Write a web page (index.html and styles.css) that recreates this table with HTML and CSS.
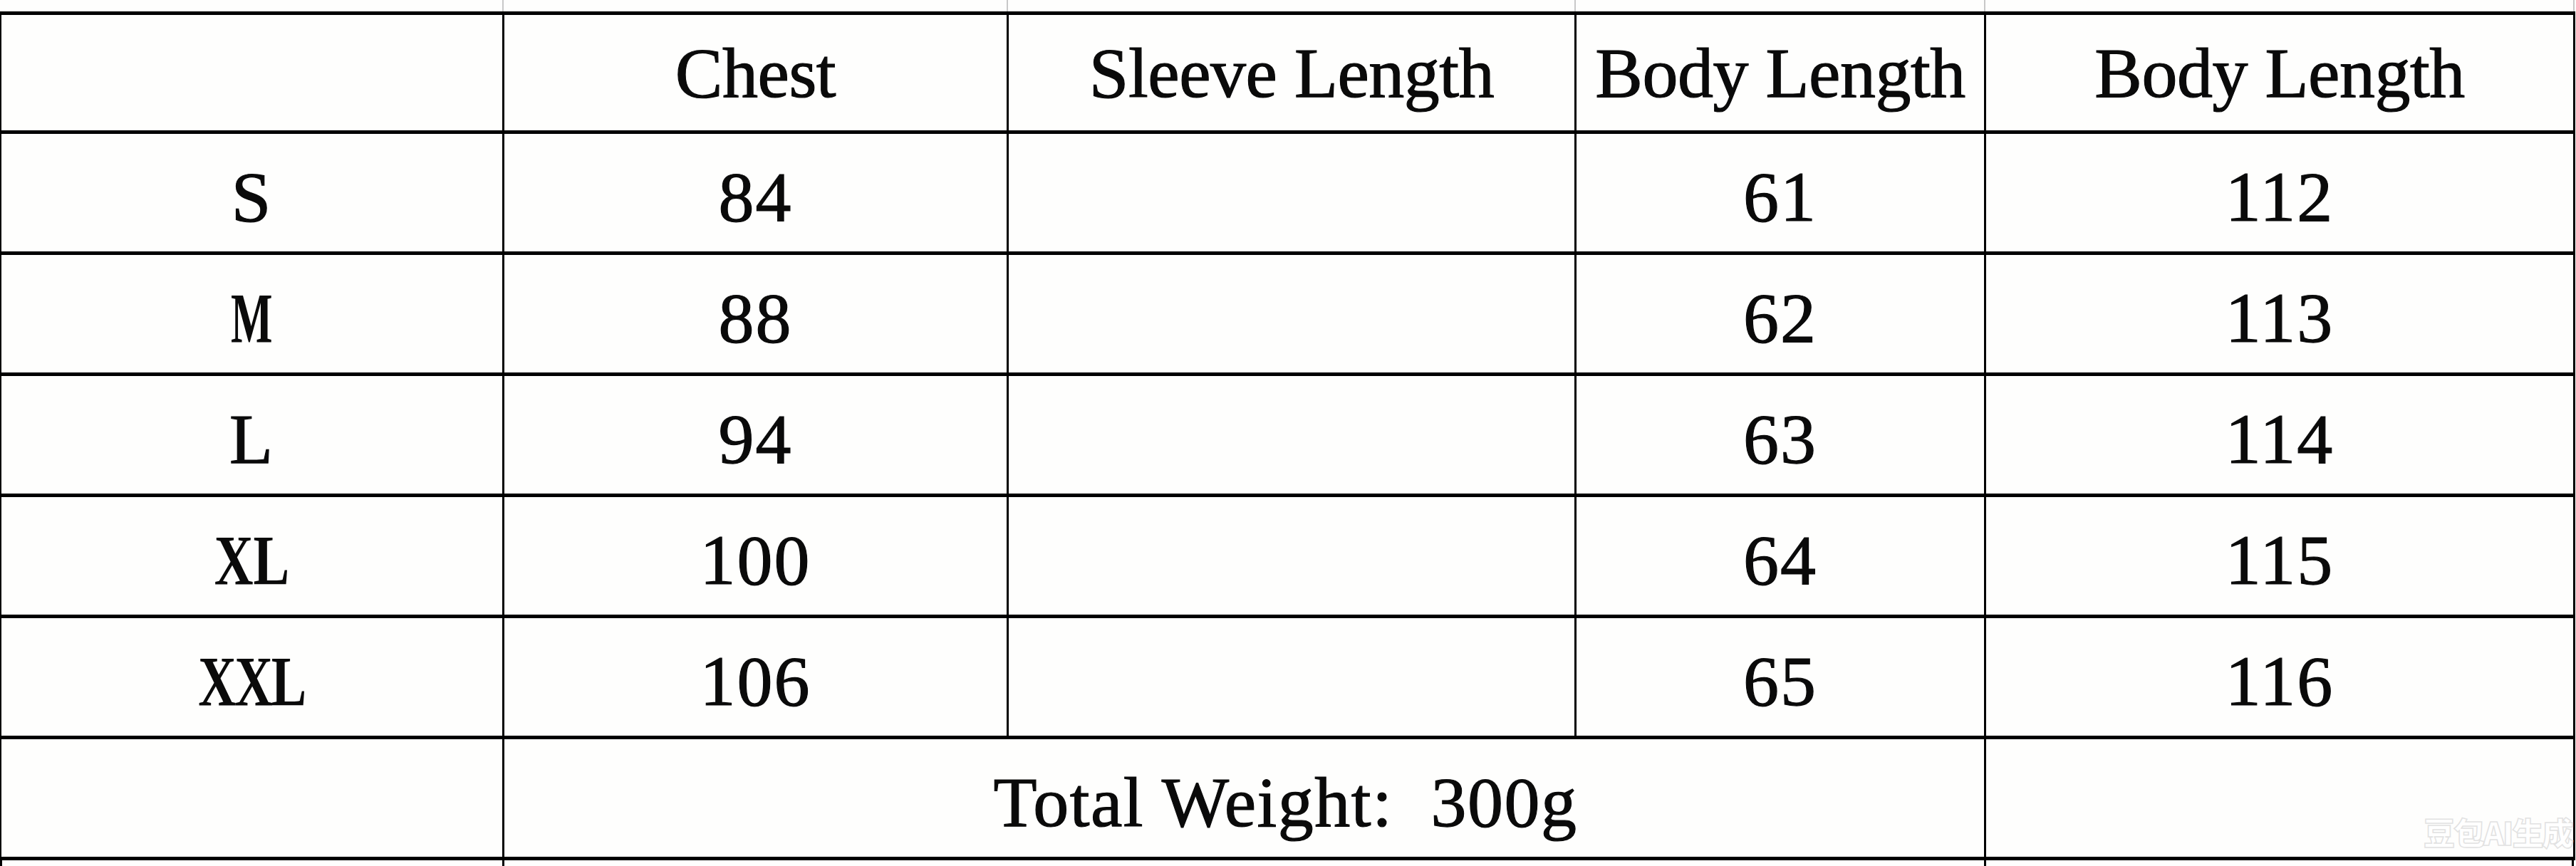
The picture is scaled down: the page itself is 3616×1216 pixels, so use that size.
FILE: index.html
```html
<!DOCTYPE html>
<html lang="en">
<head>
<meta charset="utf-8">
<title>Size Chart</title>
<link rel="stylesheet" href="styles.css">
</head>
<body>
<div class="page">
  <div class="strip strip-top">
    <div class="s s1"></div><div class="s s2"></div><div class="s s3"></div><div class="s s4"></div><div class="s s5"></div>
  </div>
  <div class="chart">
    <div class="cell head"></div>
    <div class="cell head">Chest</div>
    <div class="cell head">Sleeve Length</div>
    <div class="cell head">Body Length</div>
    <div class="cell head">Body Length</div>

    <div class="cell">S</div><div class="cell">84</div><div class="cell"></div><div class="cell">61</div><div class="cell">112</div>
    <div class="cell"><span class="cond cond-m">M</span></div><div class="cell">88</div><div class="cell"></div><div class="cell">62</div><div class="cell">113</div>
    <div class="cell">L</div><div class="cell">94</div><div class="cell"></div><div class="cell">63</div><div class="cell">114</div>
    <div class="cell"><span class="cond cond-xl">XL</span></div><div class="cell">100</div><div class="cell"></div><div class="cell">64</div><div class="cell">115</div>
    <div class="cell"><span class="cond cond-xxl">XXL</span></div><div class="cell">106</div><div class="cell"></div><div class="cell">65</div><div class="cell">116</div>

    <div class="cell"></div>
    <div class="cell total">Total Weight:  300g</div>
    <div class="cell"></div>
  </div>
  <div class="strip strip-bottom">
    <div class="b b1"></div><div class="b b2"></div><div class="b b3"></div>
  </div>
  <div class="watermark">豆包AI生成</div>
</div>
</body>
</html>
```

FILE: styles.css
```css
html, body {
  margin: 0;
  padding: 0;
  background: #fefefd;
}

.page {
  position: relative;
  width: 3616px;
  height: 1216px;
  overflow: hidden;
  font-family: "Liberation Serif", "Times New Roman", serif;
  color: #0a0a0a;
}

.strip {
  display: flex;
}

.strip-top {
  height: 16px;
}

.strip-top .s {
  box-sizing: border-box;
  height: 16px;
  border-right: 2px solid #c8c8c8;
}

.strip-top .s1 { width: 707px; }
.strip-top .s2 { width: 708px; }
.strip-top .s3 { width: 797px; }
.strip-top .s4 { width: 575px; }
.strip-top .s5 { width: 827px; }

.chart {
  display: grid;
  grid-template-columns: 703px 705px 794px 572px 824px;
  grid-template-rows: 162px repeat(6, 165px);
  column-gap: 3px;
  row-gap: 5px;
  padding: 5px 3px 5px 2px;
  background: #000;
  width: max-content;
}

.cell {
  background: #fefefd;
  display: flex;
  align-items: center;
  justify-content: center;
  font-size: 100px;
  line-height: normal;
  padding-top: 12px;
  box-sizing: border-box;
  white-space: pre;
  -webkit-text-stroke: 1.2px #0a0a0a;
  letter-spacing: 2px;
}

.cell.head {
  padding-top: 0;
  letter-spacing: -0.5px;
}

.cell.total {
  grid-column: 2 / span 3;
  padding-left: 116px;
  letter-spacing: 1.5px;
}

.cond {
  display: inline-block;
  font-weight: bold;
  letter-spacing: 0;
  -webkit-text-stroke: 0;
}

.cond-m { transform: scaleX(0.62); }
.cond-xl { transform: scaleX(0.76); }
.cond-xxl { transform: scaleX(0.74); letter-spacing: -3px; }

.strip-bottom {
  height: 8px;
}

.strip-bottom .b {
  box-sizing: border-box;
  height: 8px;
  border-left: 3px solid #000;
}

.strip-bottom .b1 { width: 705px; }
.strip-bottom .b2 { width: 2080px; }
.strip-bottom .b3 { width: 828px; border-right: 3px solid #000; }

.watermark {
  position: absolute;
  left: 3402px;
  top: 1140px;
  font-family: "Noto Sans CJK SC", sans-serif;
  font-weight: 900;
  font-size: 44px;
  line-height: 56px;
  letter-spacing: -2px;
  color: #ffffff;
  -webkit-text-stroke: 1.5px #e2e2e2;
}
```
